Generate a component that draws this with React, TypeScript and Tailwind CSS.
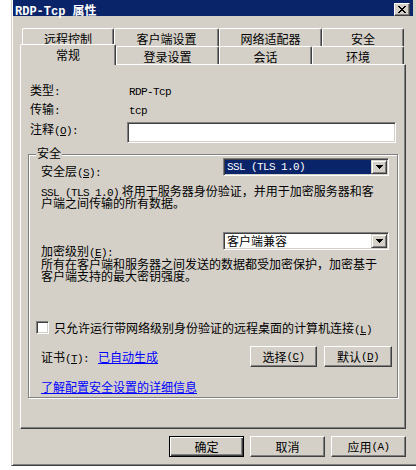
import React from "react";

const sunken =
  "border-t border-l border-t-[#808080] border-l-[#808080] border-r border-b border-r-white border-b-white shadow-[inset_1px_1px_0_#404040,inset_-1px_-1px_0_#d4d0c8]";
const raised =
  "border-t border-l border-t-white border-l-white border-r border-b border-r-[#404040] border-b-[#404040] shadow-[inset_-1px_-1px_0_#808080] bg-[#d4d0c8]";

function M({ children, bold }: { children: React.ReactNode; bold?: boolean }) {
  return bold ? (
    <span className="font-['Liberation_Mono',monospace] text-[12px] leading-[4px] font-bold">{children}</span>
  ) : (
    <span className="font-['Liberation_Mono',monospace] text-[11px] leading-[4px] tracking-[-0.6px]">{children}</span>
  );
}

function Arrow() {
  return (
    <svg width="7" height="4" viewBox="0 0 7 4" shapeRendering="crispEdges">
      <rect x="0" y="0" width="7" height="1" fill="#000" />
      <rect x="1" y="1" width="5" height="1" fill="#000" />
      <rect x="2" y="2" width="3" height="1" fill="#000" />
      <rect x="3" y="3" width="1" height="1" fill="#000" />
    </svg>
  );
}

function CloseX() {
  const px: [number, number, number][] = [
    [0, 0, 2], [6, 0, 2],
    [1, 1, 2], [5, 1, 2],
    [2, 2, 4],
    [3, 3, 2],
    [2, 4, 4],
    [1, 5, 2], [5, 5, 2],
    [0, 6, 2], [6, 6, 2],
  ];
  return (
    <svg width="8" height="7" viewBox="0 0 8 7" shapeRendering="crispEdges">
      {px.map(([x, y, w], i) => (
        <rect key={i} x={x} y={y} width={w} height={1} fill="#000" />
      ))}
    </svg>
  );
}

function Tab({ label, className }: { label: string; className: string }) {
  return (
    <div
      className={
        "flex h-[18px] items-center justify-center rounded-t-[2px] border-t border-l border-r border-t-white border-l-white border-r-[#404040] bg-[#d4d0c8] pt-[2px] shadow-[inset_-1px_0_0_#808080] " +
        className
      }
    >
      {label}
    </div>
  );
}

function DropButton() {
  return (
    <div className="flex w-[16px] items-center justify-center border-t border-l border-t-[#d4d0c8] border-l-[#d4d0c8] border-r border-b border-r-[#404040] border-b-[#404040] bg-[#d4d0c8] shadow-[inset_1px_1px_0_#fff,inset_-1px_-1px_0_#808080]">
      <Arrow />
    </div>
  );
}

function U({ c }: { c: string }) {
  return <span className="underline underline-offset-[1px]">{c}</span>;
}

export default function App() {
  return (
    <div className="h-[470px] w-[416px] overflow-hidden bg-white font-['Noto_Sans_CJK_SC',sans-serif] text-[12px] leading-[12px] text-black">
      <div className="ml-[11px] flex h-[466px] w-[405px] flex-col border-l border-b border-l-[#d4d0c8] border-b-[#404040] bg-[#d4d0c8] shadow-[inset_1px_0_0_#fff,inset_0_-1px_0_#808080]">
        {/* Title bar */}
        <div className="ml-[1px] flex h-[16px] w-[400px] items-start justify-between bg-[#0a246a]">
          <div className="ml-[2px] mt-[4px] font-bold text-white">
            <M bold>RDP-Tcp </M>属性
          </div>
          <div className={"mr-[3px] mt-[3px] flex h-[13px] w-[16px] items-center justify-center " + raised}>
            <CloseX />
          </div>
        </div>

        {/* Tabs row 1 */}
        <div className="ml-[10px] mt-[12px] flex">
          <Tab label="远程控制" className="w-[92px]" />
          <Tab label="客户端设置" className="w-[105px]" />
          <Tab label="网络适配器" className="w-[103px]" />
          <Tab label="安全" className="w-[82px]" />
        </div>

        {/* Tabs row 2 */}
        <div className="ml-[8px] -mt-[2px] flex h-[20px] items-start">
          <div className="relative z-10 flex h-[21px] w-[96px] items-center justify-center rounded-t-[2px] border-t border-l border-r border-t-white border-l-white border-r-[#404040] bg-[#d4d0c8] shadow-[inset_-1px_0_0_#808080]">
            常规
          </div>
          <Tab label="登录设置" className="mt-[2px] w-[103px]" />
          <Tab label="会话" className="mt-[2px] w-[93px]" />
          <Tab label="环境" className="mt-[2px] w-[92px]" />
        </div>

        {/* Panel */}
        <div className="ml-[8px] h-[365px] w-[386px] border-t border-l border-t-white border-l-white border-r border-b border-r-[#404040] border-b-[#404040] shadow-[inset_-1px_-1px_0_#808080]">
          <div className="ml-[9px] mt-[19px] flex">
            <div className="w-[99px]">
              类型<M>:</M>
            </div>
            <div>
              <M>RDP-Tcp</M>
            </div>
          </div>
          <div className="ml-[9px] mt-[7px] flex">
            <div className="w-[99px]">
              传输<M>:</M>
            </div>
            <div>
              <M>tcp</M>
            </div>
          </div>
          <div className="ml-[9px] mt-[7px] flex h-[21px]">
            <div className="w-[97px] pt-[1px]">
              注释<M>(<U c="O" />):</M>
            </div>
            <div className={"h-[21px] w-[269px] bg-white " + sunken}></div>
          </div>

          {/* Group box */}
          <div className="ml-[7px] mt-[11px] h-[244px] w-[370px] border border-[#808080] shadow-[inset_1px_1px_0_#fff,1px_1px_0_#fff]">
            <div className="-mt-[8px] ml-[7px] w-fit bg-[#d4d0c8] px-[1px]">安全</div>

            <div className="ml-[12px] -mt-[1px] flex items-start">
              <div className="mt-[7px] w-[182px]">
                安全层<M>(<U c="S" />):</M>
              </div>
              <div className={"flex h-[18px] w-[166px] bg-white p-[1px] " + sunken}>
                <div className="flex flex-1 items-center bg-[#0a246a] pl-[2px] text-white">
                  <M>SSL (TLS 1.0)</M>
                </div>
                <DropButton />
              </div>
            </div>

            <div className="ml-[12px] mt-[8px] leading-[12px]">
              <M>SSL (TLS 1.0)</M> 将用于服务器身份验证，并用于加密服务器和客
              <br />
              户端之间传输的所有数据。
            </div>

            <div className="ml-[12px] mt-[23px] flex items-start">
              <div className="mt-[13px] w-[182px]">
                加密级别<M>(<U c="E" />):</M>
              </div>
              <div className={"flex h-[18px] w-[166px] bg-white p-[1px] " + sunken}>
                <div className="flex flex-1 items-center pl-[2px]">客户端兼容</div>
                <DropButton />
              </div>
            </div>

            <div className="ml-[12px] mt-[1px] leading-[12px]">
              所有在客户端和服务器之间发送的数据都受加密保护，加密基于
              <br />
              客户端支持的最大密钥强度。
            </div>

            <div className="ml-[7px] mt-[39px] flex h-[13px] items-center">
              <div className={"h-[13px] w-[13px] bg-white " + sunken}></div>
              <div className="ml-[5px]">
                只允许运行带网络级别身份验证的远程桌面的计算机连接<M>(<U c="L" />)</M>
              </div>
            </div>

            <div className="ml-[12px] mt-[12px] flex h-[21px] items-center">
              <div className="w-[57px]">
                证书<M>(<U c="T" />):</M>
              </div>
              <div className="text-[#0000ff] underline underline-offset-[1px]">已自动生成</div>
              <div className="ml-auto mr-[5px] flex gap-[7px]">
                <div className={"flex h-[21px] w-[67px] items-center justify-center " + raised}>
                  选择<M>(<U c="C" />)</M>
                </div>
                <div className={"flex h-[21px] w-[68px] items-center justify-center " + raised}>
                  默认<M>(<U c="D" />)</M>
                </div>
              </div>
            </div>

            <div className="ml-[12px] mt-[14px] w-fit text-[#0000ff] underline underline-offset-[1px]">
              了解配置安全设置的详细信息
            </div>
          </div>
        </div>

        {/* Bottom buttons */}
        <div className="ml-[157px] mt-[7px] flex gap-[6px]">
          <div className="flex h-[21px] w-[75px] items-center justify-center border border-black bg-[#d4d0c8] shadow-[inset_1px_1px_0_#fff,inset_-1px_-1px_0_#404040,inset_-2px_-2px_0_#808080]">
            确定
          </div>
          <div className={"flex h-[21px] w-[75px] items-center justify-center " + raised}>取消</div>
          <div className={"flex h-[21px] w-[75px] items-center justify-center " + raised}>
            应用<M>(A)</M>
          </div>
        </div>
      </div>
    </div>
  );
}
